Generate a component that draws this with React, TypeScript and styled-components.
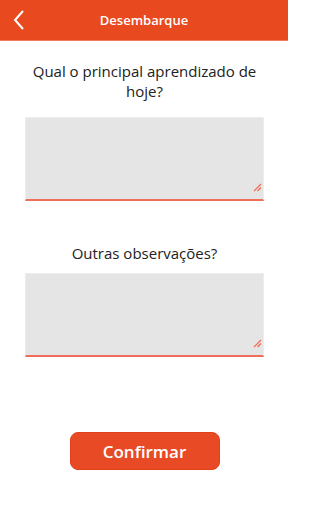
import React from "react";
import styled, { createGlobalStyle } from "styled-components";

const GlobalStyle = createGlobalStyle`
  html, body {
    margin: 0;
    padding: 0;
    background: #ffffff;
    font-family: "Open Sans", "Noto Sans", sans-serif;
  }
`;

const Screen = styled.div`
  width: 288px;
  min-height: 512px;
  display: flex;
  flex-direction: column;
  background: #ffffff;
`;

const Header = styled.header`
  height: 40px;
  background: #e9491f;
  border-bottom: 1px solid #ef7a5c;
  display: flex;
  align-items: center;
  justify-content: center;
  position: relative;
`;

const BackButton = styled.button`
  position: absolute;
  left: 6px;
  top: 6px;
  width: 28px;
  height: 28px;
  padding: 0;
  border: none;
  background: transparent;
  display: flex;
  align-items: center;
  justify-content: center;
`;

const Title = styled.h1`
  margin: 0;
  color: #ffffff;
  font-size: 13px;
  font-weight: 600;
`;

const Content = styled.main`
  display: flex;
  flex-direction: column;
  align-items: center;
  padding: 20px 24px 0 25px;
`;

const Field = styled.section<{ $top: number; $gap: number }>`
  width: 239px;
  margin-top: ${(p) => p.$top}px;
  display: flex;
  flex-direction: column;
  gap: ${(p) => p.$gap}px;
`;

const Question = styled.label`
  color: #222222;
  font-size: 15px;
  line-height: 20px;
  text-align: center;
`;

const AreaWrap = styled.div`
  position: relative;
`;

const TextArea = styled.textarea`
  display: block;
  width: 100%;
  height: 84px;
  box-sizing: border-box;
  margin: 0;
  padding: 6px;
  resize: none;
  outline: none;
  background: #e5e5e5;
  border: 1px solid #ededed;
  border-bottom: 2px solid #ef6e5b;
  font-family: inherit;
  font-size: 14px;
`;

const Handle = styled.svg`
  position: absolute;
  right: 2px;
  bottom: 9px;
`;

const ConfirmButton = styled.button`
  margin-top: 75px;
  width: 150px;
  height: 38px;
  border-radius: 8px;
  border: 1px solid #e0401a;
  background: #e84a25;
  color: #ffffff;
  font-family: inherit;
  font-size: 17px;
  font-weight: 600;
`;

const ResizeHandle = () => (
  <Handle width="9" height="9" viewBox="0 0 9 9">
    <path d="M1 8 L8 1 M4.5 8 L8 4.5" stroke="#ee6a52" strokeWidth="1.2" fill="none" />
  </Handle>
);

const App = () => {
  return (
    <Screen>
      <GlobalStyle />
      <Header>
        <BackButton aria-label="Voltar">
          <svg width="14" height="20" viewBox="0 0 14 20">
            <path d="M10 1 L2 10 L10 19" stroke="#ffffff" strokeWidth="2" fill="none" />
          </svg>
        </BackButton>
        <Title>Desembarque</Title>
      </Header>
      <Content>
        <Field $top={0} $gap={16}>
          <Question>Qual o principal aprendizado de hoje?</Question>
          <AreaWrap>
            <TextArea />
            <ResizeHandle />
          </AreaWrap>
        </Field>
        <Field $top={42} $gap={10}>
          <Question>Outras observações?</Question>
          <AreaWrap>
            <TextArea />
            <ResizeHandle />
          </AreaWrap>
        </Field>
        <ConfirmButton>Confirmar</ConfirmButton>
      </Content>
    </Screen>
  );
};

export default App;
